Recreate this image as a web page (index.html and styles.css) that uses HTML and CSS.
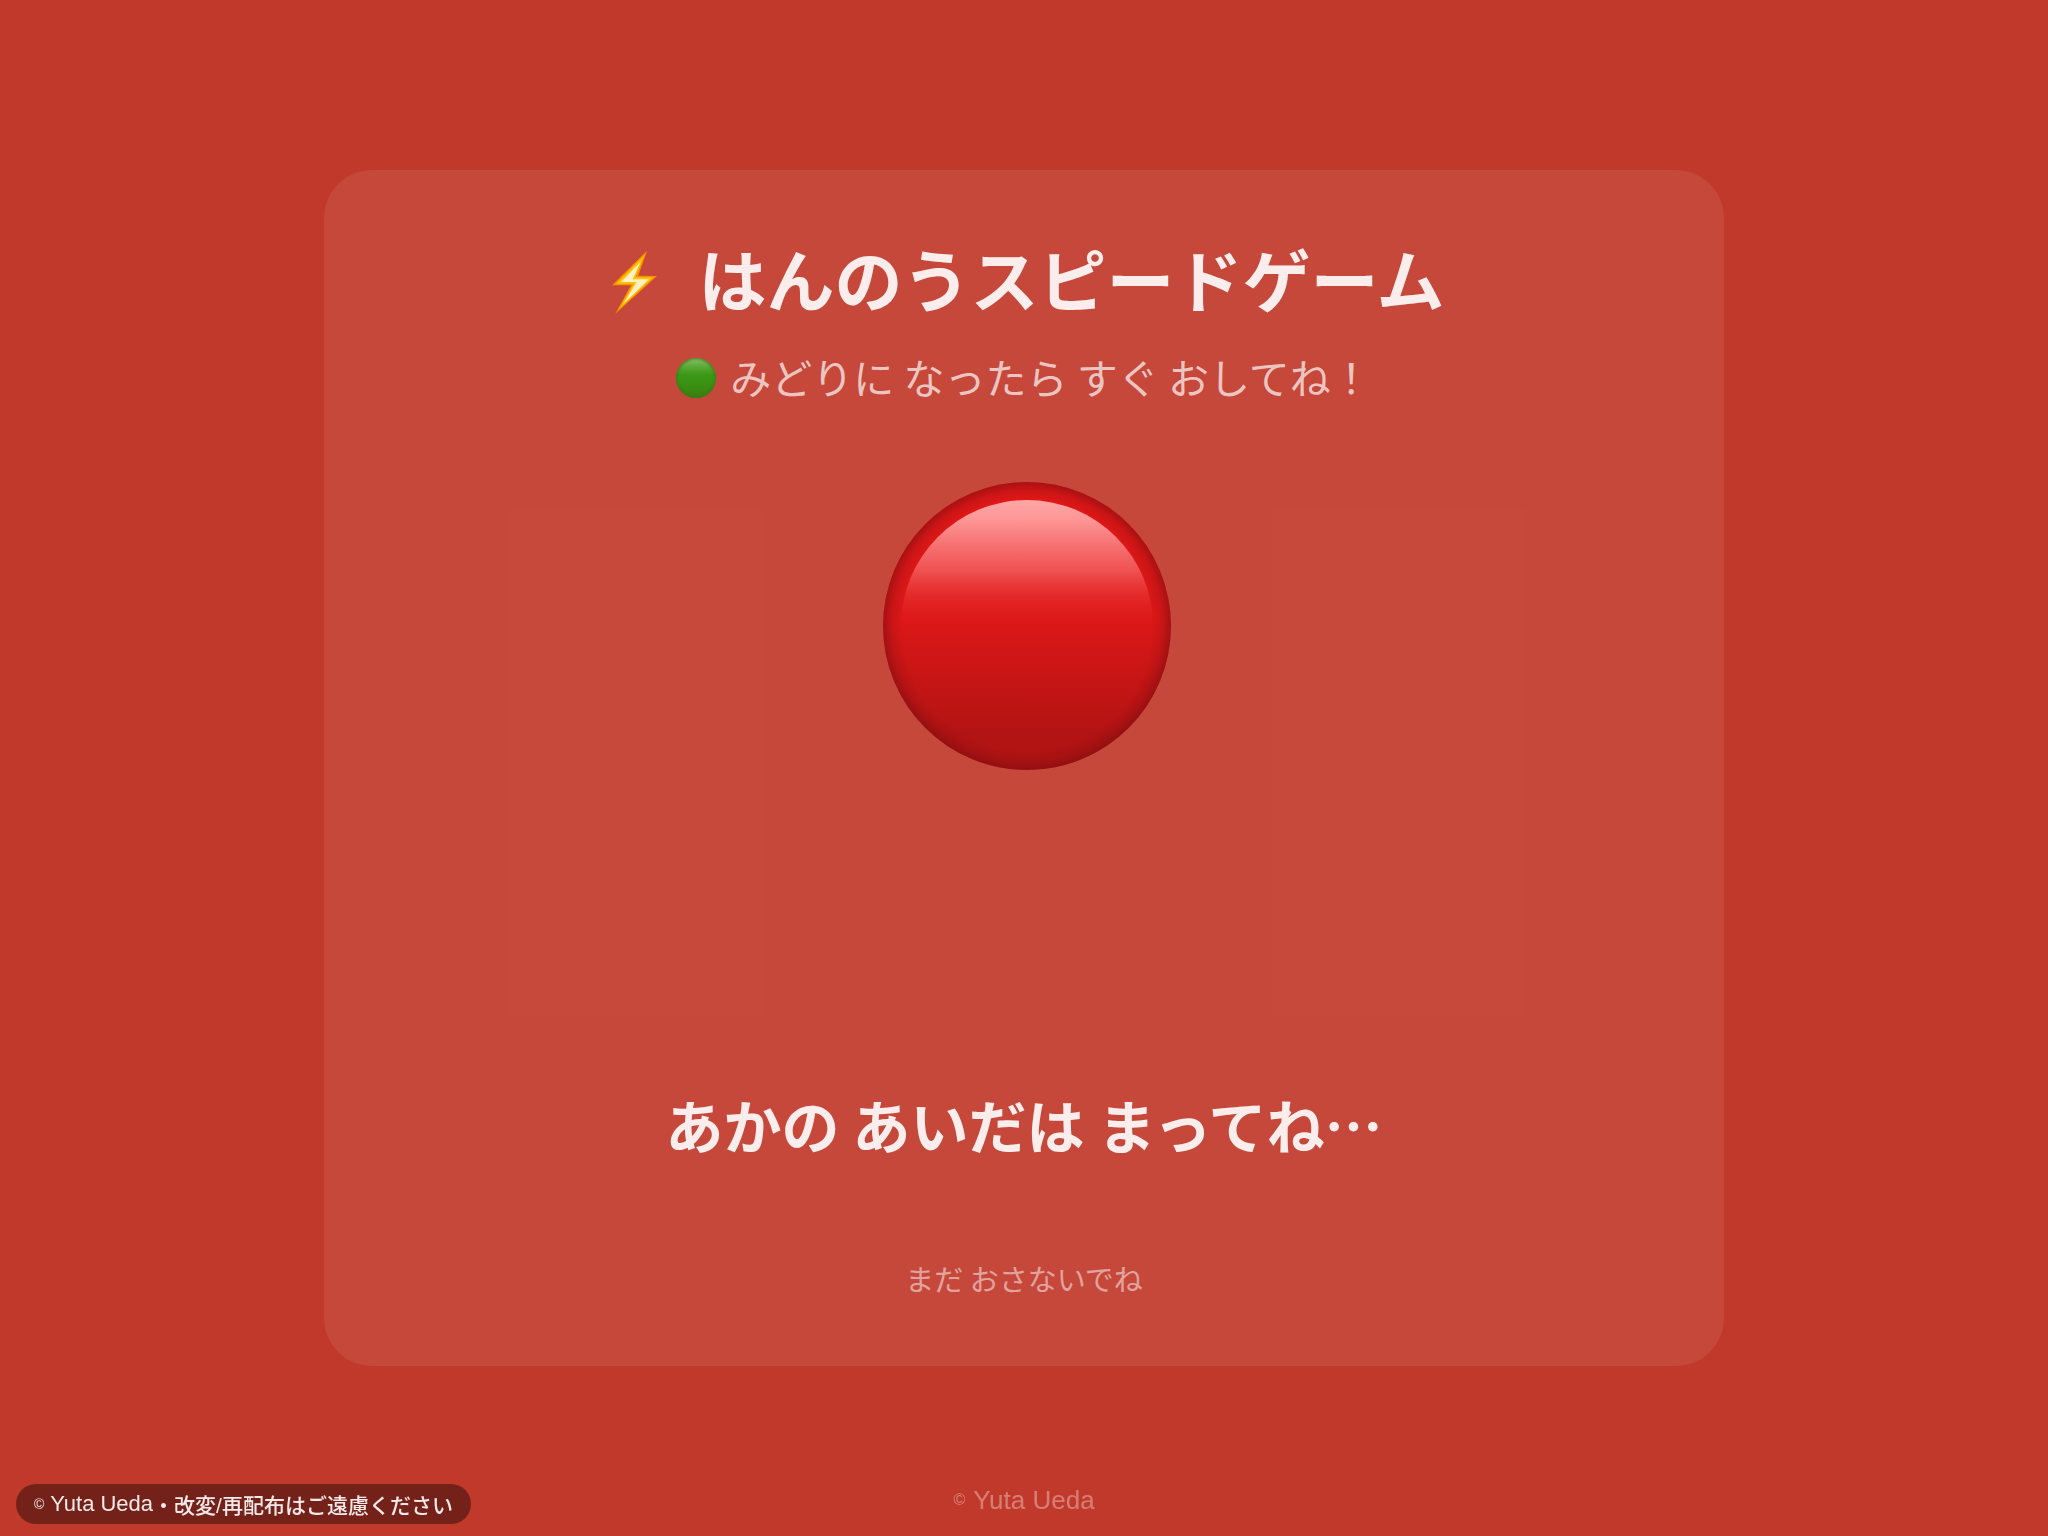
FILE: index.html
```html
<!DOCTYPE html>
<html lang="ja">
<head>
  <meta charset="UTF-8">
  <meta name="viewport" content="width=device-width, initial-scale=1.0">
  <title>はんのうスピードゲーム</title>
  <link rel="stylesheet" href="styles.css">
</head>
<body>
  <main class="card">
    <h1 class="title">
      <svg class="bolt" viewBox="0 0 135 190" aria-hidden="true">
        <path d="M105 1 L79 76 L135 77 L10 190 L57 105 L0 105 Z" fill="#fb8f00"/>
        <path d="M98 14 L70 81 L124 81 L22 175 L65 100 L12 100 Z" fill="#ffc400"/>
        <path d="M86 34 L62 87 L111 87 L34 161 L74 95 L27 95 Z" fill="#fff0c4"/>
      </svg>
      <span>はんのうスピードゲーム</span>
    </h1>
    <p class="lead">
      <span class="green-ball"></span>
      <span>みどりに なったら すぐ おしてね！</span>
    </p>

    <!-- シグナル -->
    <div class="stage">
      <svg class="signal" viewBox="0 0 288 288" role="img" aria-label="あか">
        <defs>
          <linearGradient id="base" x1="0" y1="0" x2="0" y2="1">
            <stop offset="0" stop-color="#e31717"/>
            <stop offset="0.48" stop-color="#dc1717"/>
            <stop offset="0.88" stop-color="#b31313"/>
            <stop offset="1" stop-color="#b01313"/>
          </linearGradient>
          <radialGradient id="rim">
            <stop offset="0.87" stop-color="#7a0c10" stop-opacity="0"/>
            <stop offset="0.94" stop-color="#7a0c10" stop-opacity="0.2"/>
            <stop offset="1" stop-color="#7a0c10" stop-opacity="0.55"/>
          </radialGradient>
          <linearGradient id="gloss" x1="0" y1="0" x2="0" y2="1">
            <stop offset="0" stop-color="#ffa6a6"/>
            <stop offset="0.08" stop-color="#ff9c9c" stop-opacity="0.95"/>
            <stop offset="0.28" stop-color="#ff8888" stop-opacity="0.52"/>
            <stop offset="0.38" stop-color="#ff7070" stop-opacity="0.2"/>
            <stop offset="0.48" stop-color="#ff6060" stop-opacity="0"/>
          </linearGradient>
        </defs>
        <circle cx="144" cy="144" r="144" fill="url(#base)"/>
        <circle cx="144" cy="144" r="144" fill="url(#rim)"/>
        <circle cx="144" cy="144" r="126" fill="url(#gloss)"/>
      </svg>
    </div>

    <p class="status">あかの あいだは まってね…</p>
    <p class="hint">まだ おさないでね</p>
  </main>

  <footer class="footer"><span class="mark">©</span> Yuta Ueda</footer>
  <div class="notice"><span class="mark">©</span> <span class="name">Yuta Ueda</span>・改変/再配布はご遠慮ください</div>
</body>
</html>
```

FILE: styles.css
```css
* {
  box-sizing: border-box;
}
body {
  margin: 0;
  min-height: 100vh;
  display: flex;
  align-items: center;
  justify-content: center;
  background: #c1392b;
  color: #fff;
  font-family: "Noto Sans CJK JP", sans-serif;
}
h1, p {
  margin: 0;
}
.card {
  width: 92%;
  max-width: 1400px;
  padding: 64px;
  border-radius: 48px;
  background: rgba(255, 255, 255, 0.08);
  text-align: center;
}
.title {
  display: flex;
  align-items: flex-start;
  justify-content: center;
  gap: 42px;
  padding: 0 0 8px 8px;
  font-size: 68px;
  font-weight: 700;
  line-height: 88px;
  color: rgba(255, 255, 255, 0.9);
}
.bolt {
  width: 45px;
  height: 64px;
  margin-top: 16px;
}
.lead {
  display: flex;
  align-items: flex-start;
  justify-content: center;
  gap: 14px;
  margin-top: 20px;
  padding-bottom: 4px;
  font-size: 41px;
  line-height: 52px;
  color: rgba(255, 255, 255, 0.7);
}
.green-ball {
  width: 40px;
  height: 40px;
  margin-top: 8px;
  border-radius: 50%;
  background: linear-gradient(#8cc56b, #5fab3c 20%, #3c9716 42%, #3a9414 60%, #3a7d12);
  box-shadow: inset 0 0 3px 1px #397a1a;
}
.stage {
  display: flex;
  justify-content: center;
  min-height: 680px;
  padding-top: 76px;
  padding-left: 6px;
}
.signal {
  width: 288px;
  height: 288px;
}
.status {
  padding-bottom: 8px;
  font-size: 58px;
  font-weight: 700;
  line-height: 76px;
  color: rgba(255, 255, 255, 0.9);
}
.hint {
  margin-top: 84px;
  font-size: 29px;
  line-height: 48px;
  color: rgba(255, 255, 255, 0.5);
}
.mark {
  font-size: 16px;
}
.footer {
  position: fixed;
  left: 0;
  right: 0;
  bottom: 20px;
  display: flex;
  align-items: center;
  justify-content: center;
  gap: 8px;
  font-family: "Liberation Sans", sans-serif;
  font-size: 26px;
  line-height: 32px;
  color: rgba(255, 255, 255, 0.35);
}
/* 左下の著作権表示 */
.notice {
  position: fixed;
  left: 16px;
  bottom: 12px;
  display: flex;
  align-items: center;
  height: 40px;
  padding: 0 18px;
  border-radius: 20px;
  background: rgba(0, 0, 0, 0.4);
  color: rgba(255, 255, 255, 0.9);
  font-family: "Liberation Sans", "Noto Sans CJK JP", sans-serif;
  font-size: 21px;
  font-weight: 500;
}
.notice .mark {
  font-size: 14px;
}
.notice .name {
  margin-left: 6px;
  font-size: 22px;
}
```
